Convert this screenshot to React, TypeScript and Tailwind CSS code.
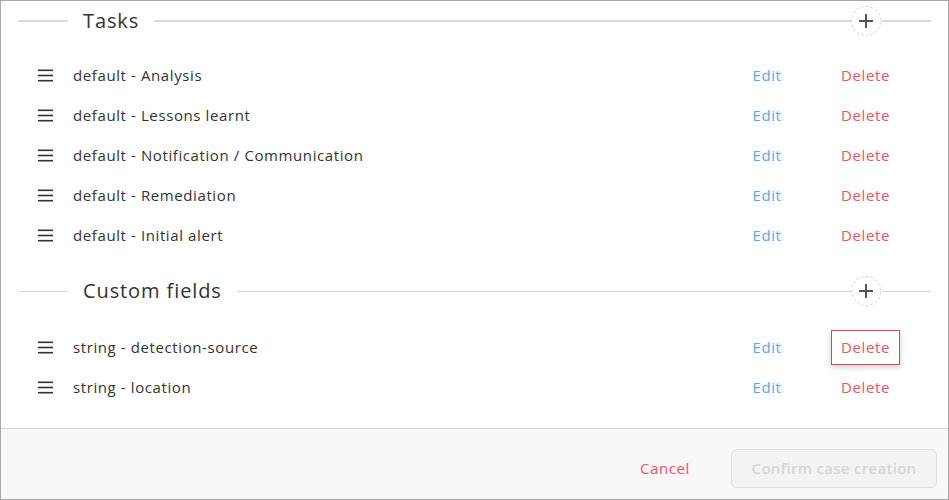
import React, { JSX } from 'react';

type Item = { label: string; focused?: boolean };

const tasks: Item[] = [
  { label: 'default - Analysis' },
  { label: 'default - Lessons learnt' },
  { label: 'default - Notification / Communication' },
  { label: 'default - Remediation' },
  { label: 'default - Initial alert' },
];

const customFields: Item[] = [
  { label: 'string - detection-source', focused: true },
  { label: 'string - location' },
];

const Hamburger = () => (
  <svg width="15" height="13" viewBox="0 0 15 13" className="shrink-0">
    <rect x="0" y="0.5" width="15" height="1.6" fill="#333" />
    <rect x="0" y="5.7" width="15" height="1.6" fill="#333" />
    <rect x="0" y="10.9" width="15" height="1.6" fill="#333" />
  </svg>
);

const SectionHeader = ({ title, thick }: { title: string; thick?: boolean }): JSX.Element => {
  const line = thick ? 'h-[2px] bg-[#d9d9d9]' : 'h-px bg-[#d6d6d6]';
  return (
    <div className="flex h-10 items-center">
      <div className={`w-[50px] ${line}`} />
      <span className="px-[15px] text-[20px] leading-none tracking-[0.9px] text-[#333]">{title}</span>
      <div className={`flex-1 ${line}`} />
      <button className="flex h-[30px] w-[30px] items-center justify-center rounded-full border border-dashed border-[#d4d4d4] bg-white">
        <svg width="16" height="16" viewBox="0 0 16 16">
          <path d="M8 1v14M1 8h14" stroke="#555" strokeWidth="2" />
        </svg>
      </button>
      <div className={`w-[50px] ${line}`} />
    </div>
  );
};

const focusBox = 'border border-solid border-[color:#ef3b3b] shadow-[0_2px_6px_rgba(0,0,0,0.2)]';

const Row = ({ item }: { item: Item }): JSX.Element => (
  <div className="flex h-10 items-center pl-[20px] pr-[31px]">
    <Hamburger />
    <span className="ml-[20px] flex-1 text-[15px] tracking-[0.6px] text-[#333]">{item.label}</span>
    <button className="w-[52px] text-center text-[15px] tracking-[0.6px] text-[#55a8f5]">Edit</button>
    <button
      className={
        'ml-[38px] h-[35px] w-[69px] text-center text-[15px] tracking-[0.6px] text-[#ff5060] ' +
        (item.focused ? focusBox : '')
      }
    >
      Delete
    </button>
  </div>
);

export default function App(): JSX.Element {
  return (
    <div
      className="flex h-[500px] w-[949px] flex-col border border-[#a6a6a6] bg-white"
      style={{ fontFamily: '"Open Sans", "Liberation Sans", sans-serif' }}
    >
      <div className="flex-1 px-[17px]">
        <SectionHeader title="Tasks" thick />
        <div className="mt-[14px]">
          {tasks.map((t) => (
            <Row key={t.label} item={t} />
          ))}
        </div>
        <div className="mt-[16px]">
          <SectionHeader title="Custom fields" />
        </div>
        <div className="mt-[16px]">
          {customFields.map((t) => (
            <Row key={t.label} item={t} />
          ))}
        </div>
      </div>
      <div className="flex h-[71px] items-start justify-end border-t border-[#d4d4d4] bg-[#f8f8f8] pr-[11px] pt-[20px]">
        <button className="mr-[41px] flex h-[39px] items-center text-[15px] tracking-[0.6px] text-[#ff5060]">Cancel</button>
        <button
          disabled
          className="flex h-[39px] w-[206px] items-center justify-center rounded-md border border-[#dedede] bg-[#f3f3f3] text-[15px] font-semibold tracking-[0.3px] text-[#d5d5d5]"
        >
          Confirm case creation
        </button>
      </div>
    </div>
  );
}
